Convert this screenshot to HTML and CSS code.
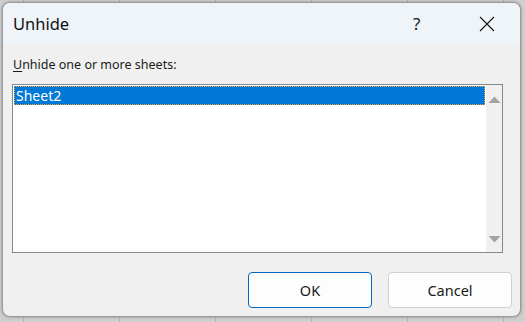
FILE: index.html
```html
<!DOCTYPE html>
<html lang="en">
<head>
  <meta charset="UTF-8" />
  <title>Unhide</title>
  <link rel="stylesheet" href="styles.css">
</head>
<body>

<div class="dialog">
  <div class="titlebar">
    <span class="title">Unhide</span>
    <span class="help">?</span>
    <span class="close">
      <svg width="16" height="16" viewBox="0 0 16 16"><path d="M1 1 L15 15 M15 1 L1 15" stroke="#1a1a1a" stroke-width="1.2" fill="none"/></svg>
    </span>
  </div>

  <div class="content">
    <label class="caption"><u>U</u>nhide one or more sheets:</label>
    <div class="listbox">
      <div class="items">
        <div class="item selected">Sheet2</div>
      </div>
      <div class="scrollbar">
        <svg width="13" height="9" viewBox="0 0 13 9"><path d="M0.5 8 L6.5 1.5 L12.5 8 Z" fill="#a3a3a3"/></svg>
        <svg width="13" height="9" viewBox="0 0 13 9"><path d="M0.5 1 L6.5 7.5 L12.5 1 Z" fill="#a3a3a3"/></svg>
      </div>
    </div>
    <div class="buttons">
      <button class="btn primary">OK</button>
      <button class="btn">Cancel</button>
    </div>
  </div>
</div>

</body>
</html>
```

FILE: styles.css
```css
body {
  margin: 0;
  padding: 0;
  width: 525px;
  height: 322px;
  overflow: hidden;
  background-color: #cfcfcf;
  background-image: repeating-linear-gradient(90deg, transparent 0 23px, #b4b4b4 23px 24px, transparent 24px 96px);
  font-family: "Noto Sans", "Open Sans", sans-serif;
}

.dialog {
  margin: 2px 0 0 2px;
  width: 517px;
  height: 313px;
  background: #f0f0f0;
  border: 1px solid #9a9a9a;
  border-radius: 8px;
  box-shadow: 0 0 3px rgba(0,0,0,0.35);
  overflow: hidden;
  display: flex;
  flex-direction: column;
}

.titlebar {
  height: 41px;
  background: #eff4f9;
  display: flex;
  align-items: center;
  padding-left: 10px;
  padding-bottom: 1px;
}

.title {
  font-size: 16.5px;
  color: #111;
  flex: 1;
}

.help {
  font-size: 17px;
  color: #1a1a1a;
  width: 14px;
  margin-right: 52px;
}

.close {
  width: 16px;
  height: 16px;
  margin-right: 25px;
  display: flex;
}

.content {
  padding: 12px 17px 0 9px;
}

.caption {
  display: block;
  font-size: 12.5px;
  color: #1a1a1a;
  line-height: 16px;
  margin-left: 1px;
}

.caption u {
  text-decoration-thickness: 1px;
  text-underline-offset: 2px;
}

.listbox {
  margin-top: 11px;
  height: 167px;
  background: white;
  border: 1px solid #828790;
  display: flex;
}

.items {
  flex: 1;
  padding: 1px;
}

.item {
  height: 19px;
  line-height: 19px;
  font-size: 14px;
  padding-left: 2px;
  color: #111;
}

.item.selected {
  background: #0078d7;
  color: white;
  outline: 1px dotted #f0a030;
  outline-offset: -1px;
}

.scrollbar {
  width: 16px;
  background: #f0f0f0;
  display: flex;
  flex-direction: column;
  justify-content: space-between;
  align-items: center;
  padding: 10px 0 8px;
}

.buttons {
  display: flex;
  justify-content: flex-end;
  gap: 16px;
  margin-top: 19px;
  margin-right: -9px;
}

.btn {
  width: 124px;
  height: 36px;
  background: #fdfdfd;
  border: 1px solid #d0d0d0;
  border-radius: 4px;
  font-family: "Noto Sans", "Open Sans", sans-serif;
  font-size: 14.5px;
  color: #1a1a1a;
}

.btn.primary {
  border-color: #0067c0;
}
```
